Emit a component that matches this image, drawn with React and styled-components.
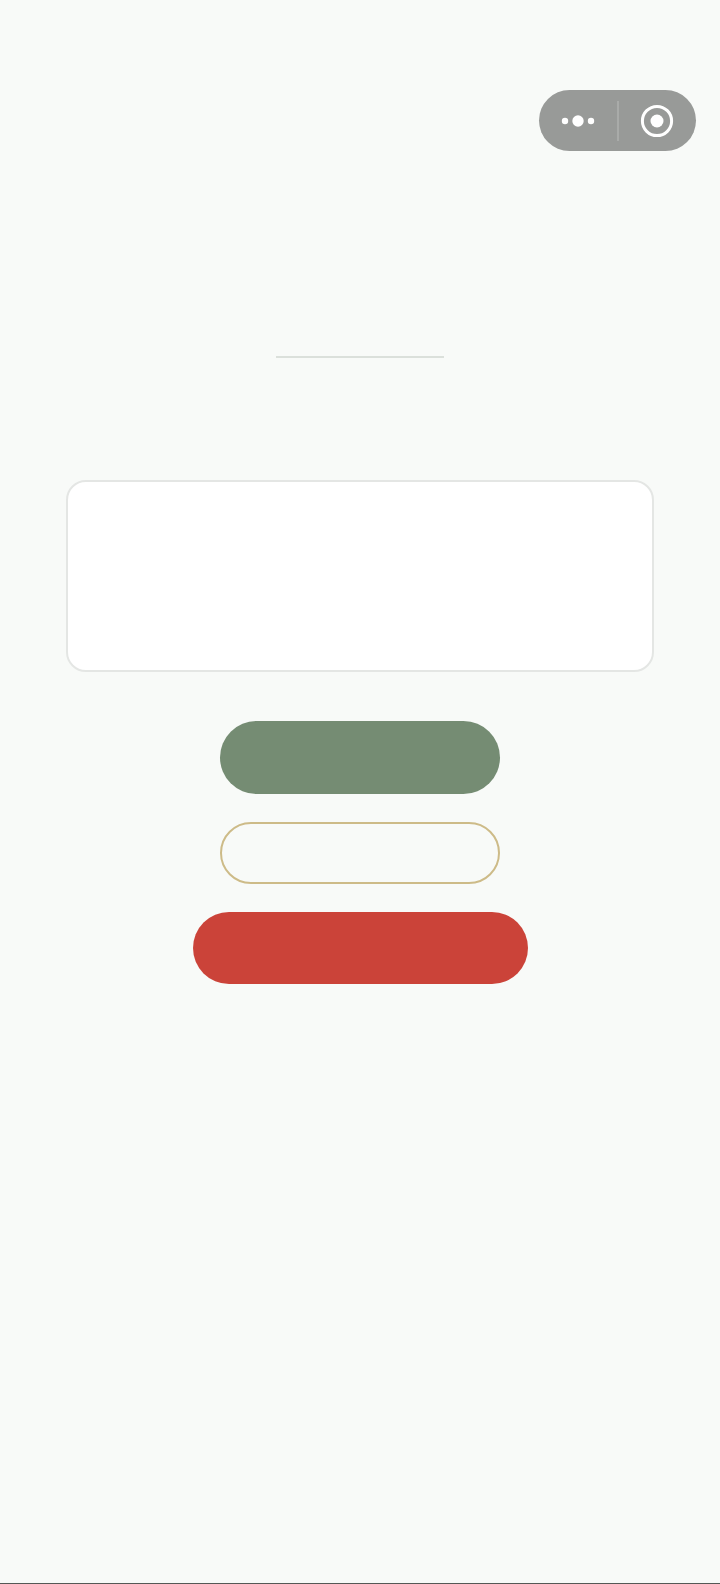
import React from "react";
import styled, { createGlobalStyle } from "styled-components";

const Global = createGlobalStyle`
  html, body {
    margin: 0;
    padding: 0;
    background: #f8faf8;
    font-family: "Noto Sans", "Noto Sans CJK SC", sans-serif;
  }
`;

const Page = styled.div`
  box-sizing: border-box;
  width: 720px;
  height: 1584px;
  display: flex;
  flex-direction: column;
  align-items: center;
  padding-top: 90px;
  background: #f8faf8;
  border-bottom: 1px solid #555855;
`;

const CapsuleRow = styled.div`
  align-self: stretch;
  display: flex;
  justify-content: flex-end;
  padding-right: 24px;
`;

const Capsule = styled.div`
  width: 157px;
  height: 61px;
  display: flex;
  align-items: center;
  border-radius: 31px;
  background: #989a98;
`;

const CapsuleSide = styled.div`
  flex: 1;
  display: flex;
  align-items: center;
  justify-content: center;
`;

const CapsuleDivider = styled.div`
  width: 2px;
  height: 40px;
  background: #a9aba9;
`;

const TitleLine = styled.div`
  width: 168px;
  height: 2px;
  margin-top: 205px;
  background: #dbe0db;
`;

const Card = styled.div`
  box-sizing: border-box;
  width: 588px;
  height: 192px;
  margin-top: 122px;
  background: #ffffff;
  border: 2px solid #e4e6e4;
  border-radius: 20px;
`;

const Actions = styled.div`
  display: flex;
  flex-direction: column;
  align-items: center;
  gap: 28px;
  margin-top: 49px;
`;

const Pill = styled.div`
  box-sizing: border-box;
  width: ${(p) => p.$width}px;
  height: ${(p) => p.$height}px;
  border-radius: ${(p) => p.$height / 2}px;
  background: ${(p) => p.$fill};
  border: ${(p) => (p.$stroke ? `2px solid ${p.$stroke}` : "none")};
`;

const MoreIcon = () => (
  <svg width="34" height="14" viewBox="0 0 34 14">
    <circle cx="4" cy="7" r="3.2" fill="#fff" />
    <circle cx="17" cy="7" r="5.7" fill="#fff" />
    <circle cx="30" cy="7" r="3.2" fill="#fff" />
  </svg>
);

const CloseIcon = () => (
  <svg width="34" height="34" viewBox="0 0 34 34">
    <circle cx="17" cy="17" r="14.6" fill="none" stroke="#fff" strokeWidth="3" />
    <circle cx="17" cy="17" r="6.5" fill="#fff" />
  </svg>
);

export default function App() {
  return (
    <>
      <Global />
      <Page>
        <CapsuleRow>
          <Capsule>
            <CapsuleSide>
              <MoreIcon />
            </CapsuleSide>
            <CapsuleDivider />
            <CapsuleSide>
              <CloseIcon />
            </CapsuleSide>
          </Capsule>
        </CapsuleRow>
        <TitleLine />
        <Card />
        <Actions>
          <Pill $width={280} $height={73} $fill="#758c73" />
          <Pill $width={280} $height={62} $fill="transparent" $stroke="#cdbb88" />
          <Pill $width={335} $height={72} $fill="#cb4339" />
        </Actions>
      </Page>
    </>
  );
}
